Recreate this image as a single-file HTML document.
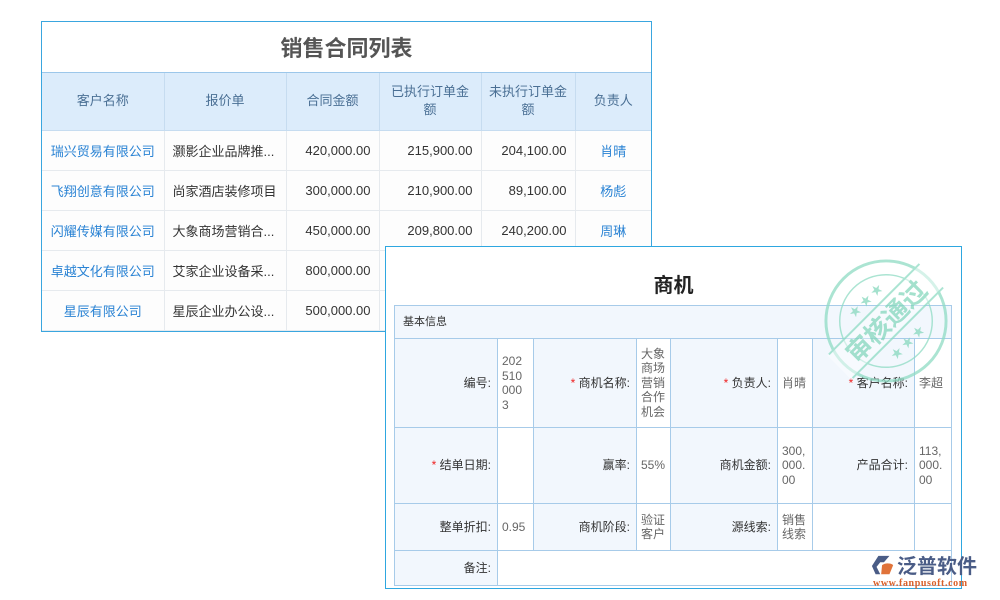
<!DOCTYPE html>
<html><head><meta charset="utf-8"><style>
*{margin:0;padding:0;box-sizing:border-box}
body{width:1000px;height:600px;background:#fff;position:relative;overflow:hidden;font-family:"Liberation Sans","Noto Sans CJK SC",sans-serif;font-size:13px;color:#333}
.lt{position:absolute;left:41px;top:21px;width:611px;border:1px solid #3aa6df;background:#fff}
.lt table{border-collapse:collapse;width:100%;table-layout:fixed}
.lt td{border:1px solid #e6eaee;height:40px;padding:0 8px;white-space:nowrap;overflow:hidden}
.lt tr td:first-child{border-left:none}
.lt tr td:last-child{border-right:none}
.lt .ttl{height:50px;text-align:center;font-size:22px;font-weight:bold;color:#555;border:none;border-bottom:1px solid #9cc7ea;background:#fff!important}
.lt .hd td{background:#dcecfb!important;color:#4a6f94;text-align:center;height:58px;line-height:18px;border-color:#c6dcf0;white-space:normal;padding:0 2px}
.lt .b{color:#2a83d4;text-align:center}
.lt .n{text-align:right}
.lt tr td{background:#fdfdfd}
.rp{position:absolute;left:385px;top:246px;width:577px;height:343px;border:1px solid #2ea7e0;background:#fff}
.rp h1{position:absolute;left:0;right:0;top:22px;text-align:center;font-size:20px;font-weight:bold;color:#222}
.rt{position:absolute;left:8px;top:58px;width:558px;border-collapse:collapse;font-size:12px;color:#555}
.rt td{border:1px solid #a7cbe9;vertical-align:middle;line-height:14.5px}
.rt .l{background:#f2f7fd;text-align:right;padding-right:6px;color:#333}
.rt .v{padding-left:4px;color:#666}
.rt .s{color:#e22}
</style></head><body>
<div class="lt"><table>
<colgroup><col style="width:122px"><col style="width:122px"><col style="width:93px"><col style="width:102px"><col style="width:94px"><col></colgroup>
<tr><td colspan="6" class="ttl">销售合同列表</td></tr>
<tr class="hd"><td>客户名称</td><td>报价单</td><td>合同金额</td><td>已执行订单金<br>额</td><td>未执行订单金<br>额</td><td>负责人</td></tr>
<tr><td class="b">瑞兴贸易有限公司</td><td>灏影企业品牌推...</td><td class="n">420,000.00</td><td class="n">215,900.00</td><td class="n">204,100.00</td><td class="b">肖晴</td></tr>
<tr><td class="b">飞翔创意有限公司</td><td>尚家酒店装修项目</td><td class="n">300,000.00</td><td class="n">210,900.00</td><td class="n">89,100.00</td><td class="b">杨彪</td></tr>
<tr><td class="b">闪耀传媒有限公司</td><td>大象商场营销合...</td><td class="n">450,000.00</td><td class="n">209,800.00</td><td class="n">240,200.00</td><td class="b">周琳</td></tr>
<tr><td class="b">卓越文化有限公司</td><td>艾家企业设备采...</td><td class="n">800,000.00</td><td class="n"></td><td class="n"></td><td class="b"></td></tr>
<tr><td class="b">星辰有限公司</td><td>星辰企业办公设...</td><td class="n">500,000.00</td><td class="n"></td><td class="n"></td><td class="b"></td></tr>
</table></div>
<div class="rp"><h1>商机</h1>
<table class="rt">
<tr style="height:33px"><td colspan="8" style="background:#f2f7fd;padding-left:8px;color:#333;font-size:11px">基本信息</td></tr>
<tr style="height:89px"><td class="l" style="width:103px">编号:</td><td class="v" style="width:36px">202<br>510<br>000<br>3</td><td class="l" style="width:103px"><span class="s">* </span>商机名称:</td><td class="v" style="width:34px">大象<br>商场<br>营销<br>合作<br>机会</td><td class="l" style="width:107px"><span class="s">* </span>负责人:</td><td class="v" style="width:35px">肖晴</td><td class="l" style="width:102px"><span class="s">* </span>客户名称:</td><td class="v">李超</td></tr>
<tr style="height:76px"><td class="l"><span class="s">* </span>结单日期:</td><td class="v"></td><td class="l">赢率:</td><td class="v">55%</td><td class="l">商机金额:</td><td class="v">300,<br>000.<br>00</td><td class="l">产品合计:</td><td class="v">113,<br>000.<br>00</td></tr>
<tr style="height:47px"><td class="l">整单折扣:</td><td class="v">0.95</td><td class="l">商机阶段:</td><td class="v">验证<br>客户</td><td class="l">源线索:</td><td class="v">销售<br>线索</td><td class="l" style="background:#fff"></td><td></td></tr>
<tr style="height:35px"><td class="l">备注:</td><td colspan="7" style="background:#fff"></td></tr>
</table></div>
<svg style="position:absolute;left:822px;top:257px" width="128" height="128" viewBox="0 0 130 130" opacity="0.75">
<g fill="none" stroke="#8fdcc4">
<circle cx="65" cy="65" r="61" stroke-width="3"/>
<circle cx="65" cy="65" r="47" stroke-width="1.5"/>
</g>
<g transform="rotate(-45 65 65)">
<rect x="-2" y="48" width="134" height="34" fill="#fff" opacity="0.5"/>
<line x1="0" y1="48" x2="130" y2="48" stroke="#8fdcc4" stroke-width="2"/>
<line x1="0" y1="82" x2="130" y2="82" stroke="#8fdcc4" stroke-width="2"/>
<text x="65" y="75" text-anchor="middle" font-size="26" font-weight="bold" fill="#86d8bd" font-family="Noto Sans CJK SC,sans-serif">审核通过</text>
<text x="65" y="40" text-anchor="middle" font-size="12" fill="#86d8bd">★ ★ ★</text>
<text x="65" y="100" text-anchor="middle" font-size="12" fill="#86d8bd">★ ★ ★</text>
</g>
</svg>
<svg style="position:absolute;left:871px;top:554px" width="24" height="24" viewBox="0 0 26 26">
<path d="M8 2H20L14 9H10L6 14L10 22H5L1 13Z" fill="#4a5c86"/>
<path d="M12 12C16 9 22 10 24 12L20 22H11Z" fill="#e0733a"/>
</svg>
<div style="position:absolute;left:897px;top:553px;font-size:20px;font-weight:bold;color:#4a5c86;font-family:'Noto Sans CJK SC',sans-serif;line-height:24px">泛普软件</div>
<div style="position:absolute;left:873px;top:578px;font-size:10px;color:#d9602a;font-family:'Liberation Serif',serif;font-weight:bold;letter-spacing:0.6px">www.fanpusoft.com</div>
</body></html>
